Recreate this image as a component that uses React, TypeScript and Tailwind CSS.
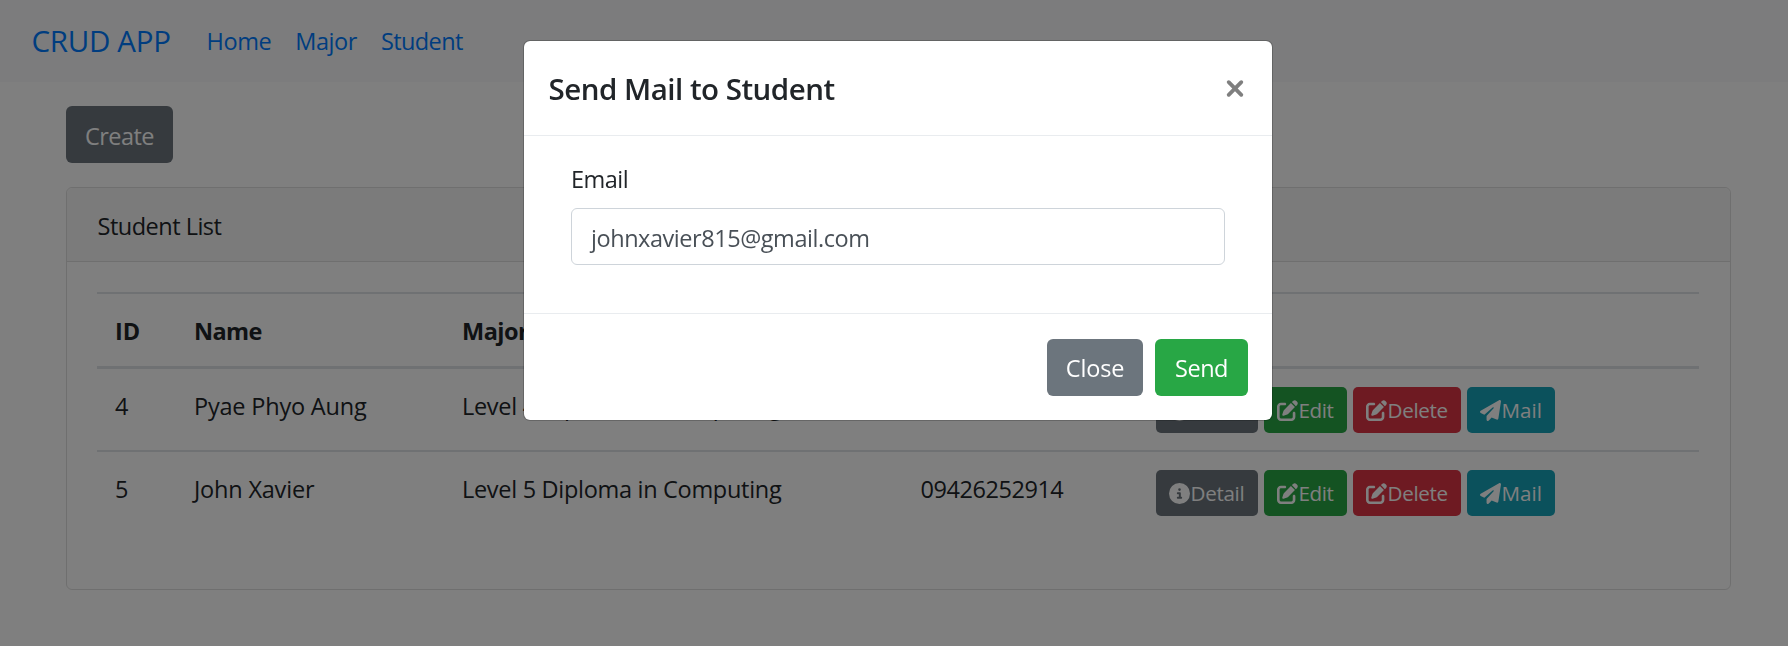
import type { ReactNode } from "react";
import { FaCircleInfo, FaPaperPlane, FaPenToSquare } from "react-icons/fa6";

type Student = { id: number; name: string; major: string; phone: string };

const students: Student[] = [
  { id: 4, name: "Pyae Phyo Aung", major: "Level 4 Diploma in Computing", phone: "" },
  { id: 5, name: "John Xavier", major: "Level 5 Diploma in Computing", phone: "09426252914" },
];

const columns = "grid grid-cols-[79px_268px_458.5px_235.5px_1fr] px-[18px]";

function Navbar() {
  return (
    <nav className="flex h-[82px] items-center bg-[#f8f9fa] pl-[31.5px] text-[#007bff]">
      <a className="w-[175px] pb-0.5 text-[29.5px] leading-[45px] tracking-[-0.3px]">CRUD APP</a>
      <div className="flex gap-6 leading-9">
        <a className="tracking-[-0.4px]">Home</a>
        <a className="tracking-[-0.45px]">Major</a>
        <a className="tracking-[-0.6px]">Student</a>
      </div>
    </nav>
  );
}

function SmallButton({ className, icon, children }: { className: string; icon: ReactNode; children: ReactNode }) {
  return (
    <button className={`flex h-[46px] items-center rounded-[5px] pl-[13px] text-[20.6px] leading-8 text-white ${className}`}>
      <span className="mr-[0.5px] text-[21px]">{icon}</span>
      {children}
    </button>
  );
}

function StudentRow({ student, className }: { student: Student; className: string }) {
  return (
    <div className={`${columns} items-start ${className}`}>
      <div className="pt-[19px]">{student.id}</div>
      <div className="pt-[19px] tracking-[-0.2px]">{student.name}</div>
      <div className="pt-[19px] tracking-[-0.3px] whitespace-nowrap">{student.major}</div>
      <div className="pt-[19px] tracking-[-0.45px]">{student.phone}</div>
      <div className="flex gap-1.5 pt-[18px]">
        <SmallButton className="w-[102px] bg-[#6c757d] tracking-[-0.3px]" icon={<FaCircleInfo />}>Detail</SmallButton>
        <SmallButton className="w-[83px] bg-[#28a745] tracking-[-0.4px]" icon={<FaPenToSquare />}>Edit</SmallButton>
        <SmallButton className="w-[108px] bg-[#dc3545] tracking-[-0.3px]" icon={<FaPenToSquare />}>Delete</SmallButton>
        <SmallButton className="w-[88px] bg-[#17a2b8]" icon={<FaPaperPlane />}>Mail</SmallButton>
      </div>
    </div>
  );
}

function StudentCard() {
  return (
    <section className="mt-6 h-[403px] w-[1665px] rounded-md border border-[#dfdfdf] bg-white">
      <h2 className="h-[74px] rounded-t-md border-b border-[#dfdfdf] bg-[#f7f7f7] pt-5 pl-[30.5px] leading-9 tracking-[-0.5px]">
        Student List
      </h2>
      <div className="pt-[30px] pr-[31px] pl-[30px]">
        <div className={`${columns} h-[77px] border-t-2 border-b-3 border-[#dee2e6] pt-[19px] leading-9 font-bold`}>
          <div>ID</div>
          <div className="tracking-[-0.6px]">Name</div>
          <div className="tracking-[-0.5px]">Major</div>
        </div>
        <StudentRow student={students[0]} className="h-[81px]" />
        <StudentRow student={students[1]} className="h-[83px] border-t-2 border-[#dee2e6]" />
      </div>
    </section>
  );
}

function MailModal() {
  return (
    <div role="dialog" className="h-[381px] w-[750px] rounded-[7px] border border-black/20 bg-white bg-clip-padding">
      <header className="flex h-[95px] justify-between border-b border-[#e9ecef] pr-[27px] pl-[24.5px]">
        <h1 className="pt-[25px] text-[29.5px] leading-[45px] font-semibold tracking-[-0.5px]">Send Mail to Student</h1>
        <button className="mt-[37px] h-5 w-5" aria-label="Close">
          <svg viewBox="0 0 20 20" className="h-5 w-5" stroke="#7f7f7f" strokeWidth="3.8" strokeLinecap="round">
            <path d="M3.7 4.2 16.3 16.8M16.3 4.2 3.7 16.8" />
          </svg>
        </button>
      </header>
      <div className="h-[178px] border-b border-[#e9ecef] px-[47px] pt-[25px]">
        <label className="block leading-9 tracking-[-0.5px]">Email</label>
        <div className="mt-[11px] h-[57px] rounded-md border border-[#ced4da] pt-2.5 pl-[19px] leading-[38px] tracking-[-0.45px] text-[#495057]">
          johnxavier815@gmail.com
        </div>
      </div>
      <footer className="flex justify-end gap-3 pt-[25px] pr-6 text-white">
        <button className="h-[57px] w-24 rounded-md bg-[#6c757d] pt-px tracking-[-0.15px]">Close</button>
        <button className="h-[57px] w-[93px] rounded-md bg-[#28a745] pt-px tracking-[-0.5px]">Send</button>
      </footer>
    </div>
  );
}

export default function App() {
  return (
    <div className="h-[646px] overflow-hidden bg-white font-['Open_Sans',sans-serif] text-[23.5px] leading-9 text-[#212529]">
      <Navbar />
      <main className="pt-6 pl-[66px]">
        <button className="block h-[57px] w-[107px] rounded-md bg-[#6c757d] pt-[3px] tracking-[-0.55px] text-white">Create</button>
        <StudentCard />
      </main>
      <div className="fixed inset-0 flex items-start justify-center bg-black/50 pt-10 pl-2">
        <MailModal />
      </div>
    </div>
  );
}
